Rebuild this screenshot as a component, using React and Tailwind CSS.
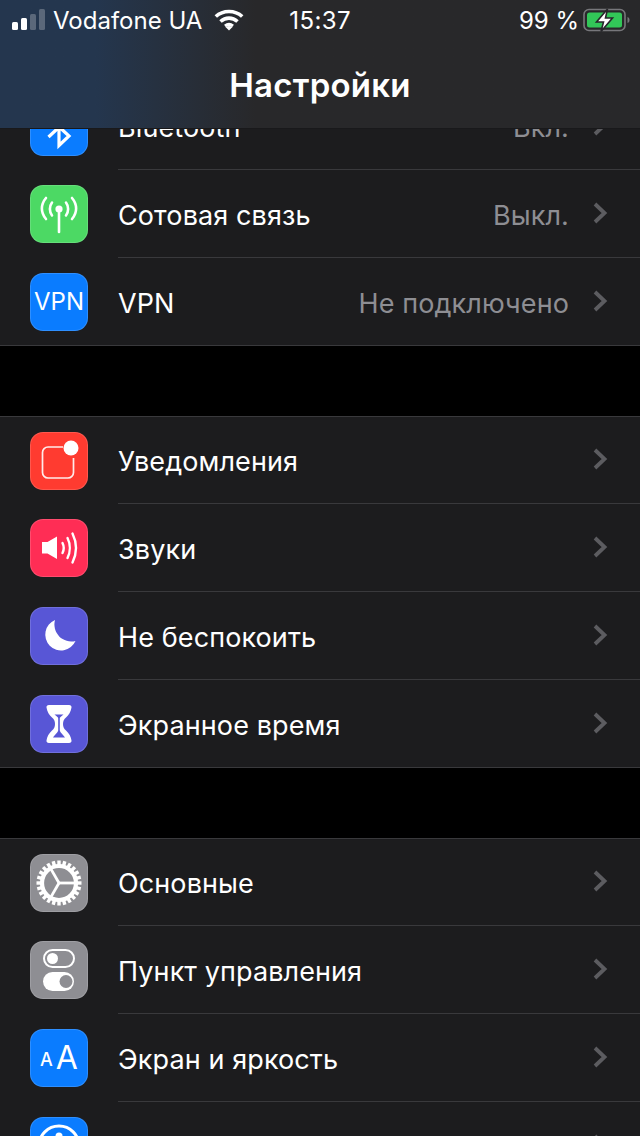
const Chevron = () => (
  <svg width="16" height="24" viewBox="0 0 16 24" fill="none" className="shrink-0">
    <path d="M3 3 12.500 12 3 21" stroke="#5c5c60" strokeWidth="3.800" />
  </svg>
);

const Tile = ({ bg, children }) => (
  <div className={`w-[58px] h-[58px] rounded-[13px] shrink-0 flex items-center justify-center border border-white/15 ${bg}`}>
    {children}
  </div>
);

const TileSvg = ({ children, ...rest }) => (
  <svg width="58" height="58" viewBox="0 0 58 58" fill="none" className="shrink-0" {...rest}>
    {children}
  </svg>
);

const BluetoothIcon = () => (
  <TileSvg>
    <path d="M18.500 19 39 38 29 47.500V10.500L39 20 18.500 39" stroke="#fff" strokeWidth="3.200" />
  </TileSvg>
);

const CellIcon = () => (
  <TileSvg stroke="#fff" strokeLinecap="round" strokeWidth="2.600">
    <circle cx="29" cy="24" r="3.600" fill="#fff" stroke="none" />
    <path d="M29 26v21" />
    <path d="M22 17.500c-2.800 3.800-2.800 9.200 0 13M36 17.500c2.800 3.800 2.800 9.200 0 13" />
    <path d="M16 13c-5.500 6.500-5.500 14.500 0 21M42 13c5.500 6.500 5.500 14.500 0 21" />
  </TileSvg>
);

const BellIcon = () => (
  <TileSvg>
    <path d="M33 15H18a5.500 5.500 0 0 0-5.500 5.500v20a5.500 5.500 0 0 0 5.500 5.500h20a5.500 5.500 0 0 0 5.500-5.500V26" stroke="#fff" strokeWidth="1.700" opacity=".9" />
    <circle cx="41" cy="16" r="7.500" fill="#fff" />
  </TileSvg>
);

const SoundIcon = () => (
  <TileSvg>
    <path d="M12 23h5.500L27 17.500v22.500L17.500 34.500H12z" fill="#fff" />
    <g stroke="#fff" strokeWidth="2.400" strokeLinecap="round">
      <path d="M32.500 24c1.600 3.200 1.600 6.800 0 10" />
      <path d="M37.500 19c3 6 3 14 0 20" />
      <path d="M42.500 14.500c4.600 9.500 4.600 19.500 0 29" />
    </g>
  </TileSvg>
);

const MoonIcon = () => (
  <TileSvg>
    <path d="M25 13A15.800 15.800 0 1 0 45.500 34 17 17 0 0 1 25 13z" fill="#fff" />
  </TileSvg>
);

const HourglassIcon = () => (
  <TileSvg>
    <path d="M19 10h20c1.800 0 2.700 1 2.500 2.500-.7 4.500-2.700 7.500-5.500 10-2 1.800-3 3.500-3 6.500s1 4.700 3 6.500c3 2.700 5 6 5.500 10 .2 1.500-.7 2.500-2.500 2.500H19c-1.800 0-2.700-1-2.500-2.500.5-4 2.500-7.300 5.500-10 2-1.800 3-3.500 3-6.500s-1-4.700-3-6.500c-2.800-2.500-4.800-5.500-5.500-10-.2-1.500.7-2.500 2.500-2.500z" fill="#fff" />
    <path d="M24.500 19.500h9l-3 2.500c-.6.600-.7 1-.7 2v11c0 2.500 3.400 4.500 5.200 7.500H23c1.800-3 5.200-5 5.200-7.500V24c0-1-.1-1.400-.7-2z" fill="#5856d6" />
  </TileSvg>
);

const GearIcon = () => {
  const teeth = Array.from({ length: 24 }, (_, i) => i * 15);
  const spokes = [90, 210, 330];
  return (
    <TileSvg stroke="#fff">
      <circle cx="29" cy="29" r="17" strokeWidth="4.200" />
      {teeth.map((a) => (
        <path key={a} d="M29 13V6.500" strokeWidth="3.400" transform={`rotate(${a} 29 29)`} />
      ))}
      {spokes.map((a) => (
        <path key={a} d="M29 29V13" strokeWidth="2.800" transform={`rotate(${a} 29 29)`} />
      ))}
    </TileSvg>
  );
};

const ToggleIcon = () => (
  <TileSvg>
    <rect x="14" y="9" width="30" height="17" rx="8.500" stroke="#fff" strokeWidth="2" />
    <circle cx="22.500" cy="17.500" r="5.500" fill="#fff" />
    <rect x="13" y="31" width="31" height="19" rx="9.500" fill="#fff" />
    <circle cx="36" cy="40.500" r="6.500" fill="#8e8e93" />
  </TileSvg>
);

const SignalBars = () => (
  <div className="flex items-end gap-[3px] h-[21px] mt-[-1px]">
    <div className="w-[6px] h-[8px] rounded-[1.5px] bg-white" />
    <div className="w-[6px] h-[12px] rounded-[1.5px] bg-white" />
    <div className="w-[6px] h-[16px] rounded-[1.5px] bg-white/25" />
    <div className="w-[6px] h-[21px] rounded-[1.5px] bg-white/25" />
  </div>
);

const WifiIcon = () => (
  <svg width="30" height="22" viewBox="0 0 30 22" fill="none" stroke="#fff" strokeWidth="3.600">
    <path d="M1.800 7.500C9 .8 21 .8 28.200 7.500" />
    <path d="M6.500 12.500c5-4.500 12-4.500 17 0" />
    <path d="M11 17c2.500-2 5.500-2 8 0" strokeWidth="3" />
    <path d="M15 21.500 11.500 18c2-1.500 5-1.500 7 0z" fill="#fff" stroke="none" />
  </svg>
);

const Battery = () => (
  <svg width="48" height="24" viewBox="0 0 48 24" fill="none">
    <rect x="1" y="1.500" width="41" height="21" rx="5" stroke="#77777b" strokeWidth="1.600" />
    <rect x="4" y="4.500" width="35" height="15" rx="2.500" fill="#32c758" />
    <path d="M44.500 9v6c1.500-.5 2-1.500 2-3s-.5-2.500-2-3z" fill="#77777b" />
    <path d="M24.500 1 13.500 14h7l-2.500 9.500L29.500 10h-7z" fill="#fff" stroke="#26262a" strokeWidth="1.600" />
  </svg>
);

const Row = ({ icon, label, value, first, last }) => (
  <div className={`flex items-center pl-[30px] bg-[#1c1c1e] ${first ? "h-[87px]" : "h-[88px]"} ${last ? "border-b border-[#39393c]" : ""}`}>
    {icon}
    <div className={`flex items-center flex-1 h-full ml-[30px] pr-[32px] ${last ? "" : "border-b border-[#39393c]"}`}>
      <span className="text-[27px] tracking-[0.1px] pt-[5px] text-white flex-1">{label}</span>
      {value && <span className="text-[27px] tracking-[0.1px] pt-[5px] text-[#8e8e93]">{value}</span>}
      <span className="ml-[23px] mt-[-2px]"><Chevron /></span>
    </div>
  </div>
);

const Group = ({ rows }) => (
  <div className="border-t border-[#39393c]">
    {rows.map((row, i) => (
      <Row key={row.label} {...row} first={i === 0} last={i === rows.length - 1} />
    ))}
  </div>
);

const blue = "bg-[#0a7cff]";
const indigo = "bg-[#5856d6]";
const gray = "bg-[#8e8e93]";

const group1 = [
  { label: "Bluetooth", value: "Вкл.", icon: <Tile bg={blue}><BluetoothIcon /></Tile> },
  { label: "Сотовая связь", value: "Выкл.", icon: <Tile bg="bg-[#4cd964]"><CellIcon /></Tile> },
  { label: "VPN", value: "Не подключено", icon: <Tile bg={blue}><span className="text-[24px] text-white">VPN</span></Tile> },
];

const group2 = [
  { label: "Уведомления", icon: <Tile bg="bg-[#ff3b30]"><BellIcon /></Tile> },
  { label: "Звуки", icon: <Tile bg="bg-[#ff2d55]"><SoundIcon /></Tile> },
  { label: "Не беспокоить", icon: <Tile bg={indigo}><MoonIcon /></Tile> },
  { label: "Экранное время", icon: <Tile bg={indigo}><HourglassIcon /></Tile> },
];

const group3 = [
  { label: "Основные", icon: <Tile bg={gray}><GearIcon /></Tile> },
  { label: "Пункт управления", icon: <Tile bg={gray}><ToggleIcon /></Tile> },
  {
    label: "Экран и яркость",
    icon: (
      <Tile bg={blue}>
        <span className="text-white flex items-baseline gap-[3px]">
          <span className="text-[18px] font-medium -translate-y-[3px]">A</span>
          <span className="text-[32px]">A</span>
        </span>
      </Tile>
    ),
  },
  {
    label: "Универсальный доступ",
    icon: (
      <Tile bg={blue}>
        <TileSvg>
          <circle cx="29" cy="29" r="20" stroke="#fff" strokeWidth="3" />
          <circle cx="29" cy="19" r="3.500" fill="#fff" />
        </TileSvg>
      </Tile>
    ),
  },
];

export default function App() {
  return (
    <div className="relative w-[640px] h-[1136px] overflow-hidden bg-black font-['Inter','Noto_Sans',sans-serif]">
      <header className="absolute top-0 left-0 right-0 z-10 h-[129px] border-b border-[#19191b] bg-gradient-to-r from-[#24364e] from-15% to-[#28282a] to-40%">
        <div className="flex items-center h-[40px] pl-[12px] pr-[9px] text-[24px] text-white">
          <SignalBars />
          <span className="ml-[8px] pt-[2px]">Vodafone UA</span>
          <span className="ml-[12px]"><WifiIcon /></span>
          <span className="ml-[45px] pt-[2px] flex-1 tracking-[0.4px]">15:37</span>
          <span className="mr-[4px] pt-[2px]">99 %</span>
          <Battery />
        </div>
        <div className="text-center text-[33px] tracking-[0.25px] leading-[40px] font-semibold text-white mt-[25px]">Настройки</div>
      </header>
      <main className="pt-[82px]">
        <Group rows={group1} />
        <div className="h-[70px]" />
        <Group rows={group2} />
        <div className="h-[70px]" />
        <Group rows={group3} />
      </main>
    </div>
  );
}
